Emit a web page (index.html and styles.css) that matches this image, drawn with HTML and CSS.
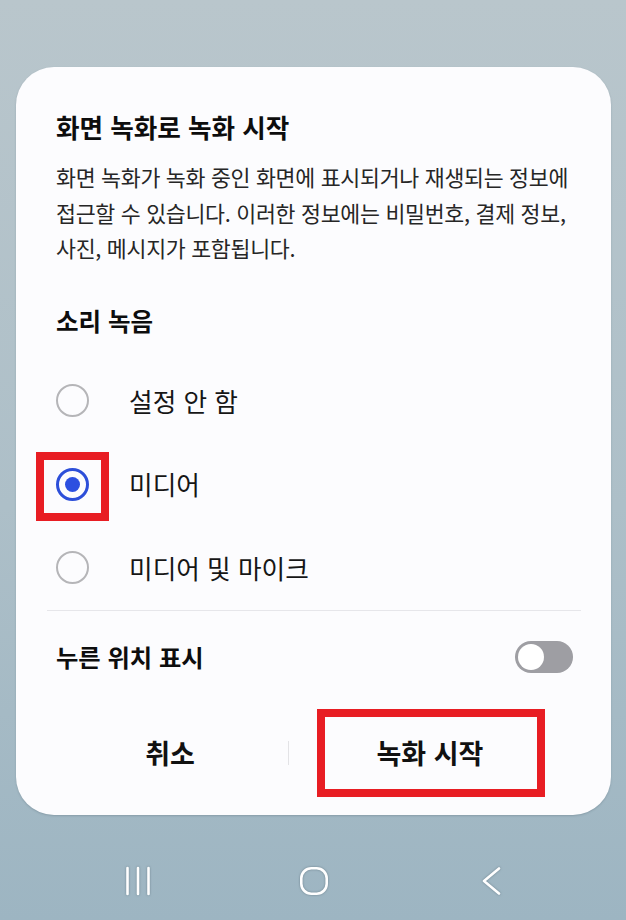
FILE: index.html
```html
<!DOCTYPE html>
<html lang="ko">
<head>
<meta charset="utf-8">
<title>화면 녹화</title>
<link rel="stylesheet" href="styles.css">
</head>
<body>
<div class="screen">
  <div class="card">
    <h1 class="title">화면 녹화로 녹화 시작</h1>
    <p class="desc">화면 녹화가 녹화 중인 화면에 표시되거나 재생되는 정보에<br>접근할 수 있습니다. 이러한 정보에는 비밀번호, 결제 정보,<br>사진, 메시지가 포함됩니다.</p>
    <h2 class="section">소리 녹음</h2>
    <ul class="radios">
      <li class="radio-row"><span class="radio"></span><span class="label">설정 안 함</span></li>
      <li class="radio-row"><span class="mark"><span class="radio checked"><span class="dot"></span></span><span class="hl hl-radio"></span></span><span class="label">미디어</span></li>
      <li class="radio-row"><span class="radio"></span><span class="label">미디어 및 마이크</span></li>
    </ul>
    <div class="divider"></div>
    <div class="toggle-row">
      <span class="toggle-label">누른 위치 표시</span>
      <span class="toggle"><span class="knob"></span></span>
    </div>
    <div class="buttons">
      <div class="btn">취소</div>
      <div class="sep"></div>
      <div class="btn btn-primary">녹화 시작<span class="hl hl-btn"></span></div>
    </div>
  </div>
  <nav class="nav">
    <svg class="ic ic-recent" width="26" height="30" viewBox="0 0 26 30"><path d="M2.5 2v26M13 2v26M23.5 2v26" fill="none" stroke="#fff" stroke-width="2.6" stroke-linecap="round"/></svg>
    <svg class="ic ic-home" width="30" height="30" viewBox="0 0 30 30"><rect x="2.3" y="2.3" width="25.4" height="25.4" rx="10" fill="none" stroke="#fff" stroke-width="2.6"/></svg>
    <svg class="ic ic-back" width="22" height="30" viewBox="0 0 22 30"><path d="M19 2.5L4 15l15 12.5" fill="none" stroke="#fff" stroke-width="2.6" stroke-linecap="round" stroke-linejoin="round"/></svg>
  </nav>
</div>
</body>
</html>
```
FILE: styles.css
```css
* { box-sizing: border-box; }
html, body { margin: 0; padding: 0; }
body {
  font-family: "Noto Sans CJK KR", "Noto Sans", sans-serif;
  color: #141414;
}
.screen {
  width: 626px;
  height: 920px;
  background: linear-gradient(180deg, #b9c6cc 0%, #adbfc8 55%, #9db5c2 100%);
  padding-top: 67px;
  display: flex;
  flex-direction: column;
  overflow: hidden;
}
.card {
  margin: 0 15px 0 16px;
  background: #fcfcfe;
  border-radius: 38px;
  padding: 45px 40px 12.5px 40px;
  box-shadow: 0 1px 2px rgba(60, 80, 90, 0.25);
}
.title {
  margin: 0;
  font-size: 25.6px;
  line-height: 30px;
  font-weight: 700;
  color: #0d0d0d;
  white-space: nowrap;
}
.desc {
  margin: 17px 0 0;
  font-size: 21.7px;
  line-height: 35.5px;
  letter-spacing: -0.3px;
  color: #262626;
  white-space: nowrap;
}
.section {
  margin: 40.5px 0 0;
  font-size: 24.5px;
  line-height: 30px;
  font-weight: 700;
  color: #0d0d0d;
}
.radios {
  list-style: none;
  margin: 23px 0 0;
  padding: 0;
}
.radio-row {
  height: 83.5px;
  display: flex;
  align-items: center;
  gap: 40px;
}
.mark { position: relative; display: flex; }
.radio {
  width: 33px;
  height: 33px;
  border-radius: 50%;
  border: 2.5px solid #b5b5b8;
  display: flex;
  align-items: center;
  justify-content: center;
  flex: none;
}
.radio.checked { border: 3px solid #2d4fd9; }
.dot {
  width: 15px;
  height: 15px;
  border-radius: 50%;
  background: #2c4fe0;
}
.label {
  font-size: 25.7px;
  line-height: 30px;
  color: #161616;
}
.hl {
  position: absolute;
  border: 8px solid #e81d23;
}
.hl-radio {
  left: -20px;
  top: -16px;
  width: 73px;
  height: 69px;
}
.divider {
  height: 1px;
  background: #e6e6ea;
  margin: 0 -10px 0 -9px;
}
.toggle-row {
  height: 92px;
  display: flex;
  align-items: center;
  justify-content: space-between;
}
.toggle-label {
  font-size: 24.3px;
  line-height: 30px;
  font-weight: 700;
  color: #0d0d0d;
}
.toggle {
  width: 58px;
  height: 32px;
  border-radius: 16px;
  background: #9e9ea3;
  display: flex;
  align-items: center;
  padding-left: 3px;
  margin-right: -2px;
}
.knob {
  width: 26px;
  height: 26px;
  border-radius: 50%;
  background: #fff;
}
.buttons {
  height: 100px;
  margin-left: -4px;
  display: grid;
  grid-template-columns: 236px 1px 1fr;
  align-items: center;
}
.btn {
  height: 100%;
  display: flex;
  align-items: center;
  justify-content: center;
  font-size: 27px;
  font-weight: 700;
  color: #111;
  position: relative;
}
.sep {
  height: 24px;
  background: #e3e3e6;
}
.hl-btn {
  left: 28px;
  top: 6px;
  width: 228px;
  height: 88px;
}
.nav {
  flex: 1;
  display: flex;
  align-items: center;
  padding-left: 125px;
  padding-top: 27px;
}
.ic { filter: drop-shadow(0 0 1px rgba(70, 90, 100, 0.55)); flex: none; }
.ic-home { margin-left: 148px; }
.ic-back { margin-left: 151px; }
```
